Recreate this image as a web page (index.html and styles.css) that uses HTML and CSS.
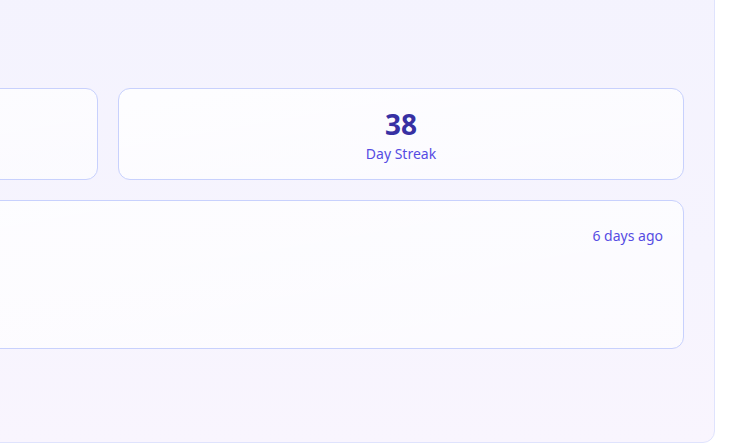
FILE: index.html
```html
<!DOCTYPE html>
<html lang="en">
<head>
<meta charset="utf-8">
<title>Stats</title>
<link rel="stylesheet" href="styles.css">
</head>
<body>
<div class="panel">
  <div class="stats">
    <div class="card stat"></div>
    <div class="card stat">
      <div class="stat-value">38</div>
      <div class="stat-label">Day Streak</div>
    </div>
  </div>
  <div class="card activity">
    <div class="activity-head">
      <span class="activity-time">6 days ago</span>
    </div>
  </div>
</div>
</body>
</html>
```

FILE: styles.css
```css
html, body {
  margin: 0;
  padding: 0;
  background: #ffffff;
  overflow: hidden;
}
body {
  font-family: "Noto Sans", "Open Sans", sans-serif;
  width: 737px;
  height: 443px;
}
.panel {
  box-sizing: border-box;
  width: 1214px;
  height: 463px;
  margin-left: -499px;
  margin-top: -20px;
  padding: 107px 30px 30px;
  border: 1px solid #dfe3fd;
  border-radius: 12px;
  background: linear-gradient(180deg, #f4f3fe 0%, #f6f4fe 60%, #f9f5fe 100%);
  display: flex;
  flex-direction: column;
  gap: 20px;
}
.stats {
  display: grid;
  grid-template-columns: 1fr 1fr;
  gap: 20px;
}
.card {
  box-sizing: border-box;
  border: 1px solid #c8d1fd;
  border-radius: 12px;
  background: linear-gradient(170deg, rgba(255,255,255,0.85), rgba(255,255,255,0.6));
}
.stat {
  height: 92px;
  padding-top: 18px;
  display: flex;
  flex-direction: column;
  align-items: center;
  gap: 3px;
}
.stat-value {
  font-size: 28px;
  font-weight: 700;
  line-height: 34px;
  color: #3730a3;
}
.stat-label {
  font-size: 14px;
  line-height: 20px;
  color: #564ce3;
}
.activity {
  height: 149px;
  padding: 25px 20px 20px;
}
.activity-head {
  display: flex;
  justify-content: flex-end;
  align-items: center;
}
.activity-time {
  font-size: 14px;
  line-height: 20px;
  color: #564ce3;
}
```
